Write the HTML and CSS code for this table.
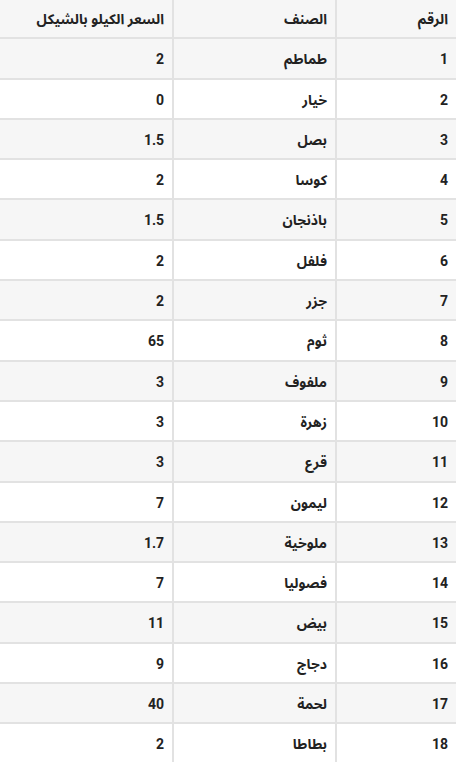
FILE: index.html
```html
<!DOCTYPE html>
<html lang="ar" dir="rtl">
<head>
<meta charset="utf-8">
<link rel="stylesheet" href="styles.css">
</head>
<body>
<table class="prices">
<thead>
<tr><th class="c-num">الرقم</th><th class="c-name">الصنف</th><th class="c-price">السعر الكيلو بالشيكل</th></tr>
</thead>
<tbody>
<tr><td>1</td><td>طماطم</td><td>2</td></tr>
<tr><td>2</td><td>خيار</td><td>0</td></tr>
<tr><td>3</td><td>بصل</td><td>1.5</td></tr>
<tr><td>4</td><td>كوسا</td><td>2</td></tr>
<tr><td>5</td><td>باذنجان</td><td>1.5</td></tr>
<tr><td>6</td><td>فلفل</td><td>2</td></tr>
<tr><td>7</td><td>جزر</td><td>2</td></tr>
<tr><td>8</td><td>ثوم</td><td>65</td></tr>
<tr><td>9</td><td>ملفوف</td><td>3</td></tr>
<tr><td>10</td><td>زهرة</td><td>3</td></tr>
<tr><td>11</td><td>قرع</td><td>3</td></tr>
<tr><td>12</td><td>ليمون</td><td>7</td></tr>
<tr><td>13</td><td>ملوخية</td><td>1.7</td></tr>
<tr><td>14</td><td>فصوليا</td><td>7</td></tr>
<tr><td>15</td><td>بيض</td><td>11</td></tr>
<tr><td>16</td><td>دجاج</td><td>9</td></tr>
<tr><td>17</td><td>لحمة</td><td>40</td></tr>
<tr><td>18</td><td>بطاطا</td><td>2</td></tr>
</tbody>
</table>
</body>
</html>
```
FILE: styles.css
```css
html, body {
  margin: 0;
  padding: 0;
  background: #fff;
}
body {
  font-family: "Roboto", "Noto Sans Arabic", "DejaVu Sans", sans-serif;
  font-size: 14px;
  color: #222;
}
.prices {
  width: 456px;
  border-collapse: collapse;
  direction: rtl;
}
.prices th,
.prices td {
  text-align: right;
  font-weight: bold;
  padding: 11px 8px 9px;
  line-height: 18.3px;
  border: 2px solid #e2e2e2;
}
.prices tr > :first-child { border-right: none; }
.prices tr > :last-child { border-left: none; }
.prices thead th { background: #f6f6f6; border-top: none; padding-top: 10px; }
.c-num { width: 103px; }
.c-name { width: 145px; }
.prices tbody tr:nth-child(odd) td { background: #f6f6f6; }
```
